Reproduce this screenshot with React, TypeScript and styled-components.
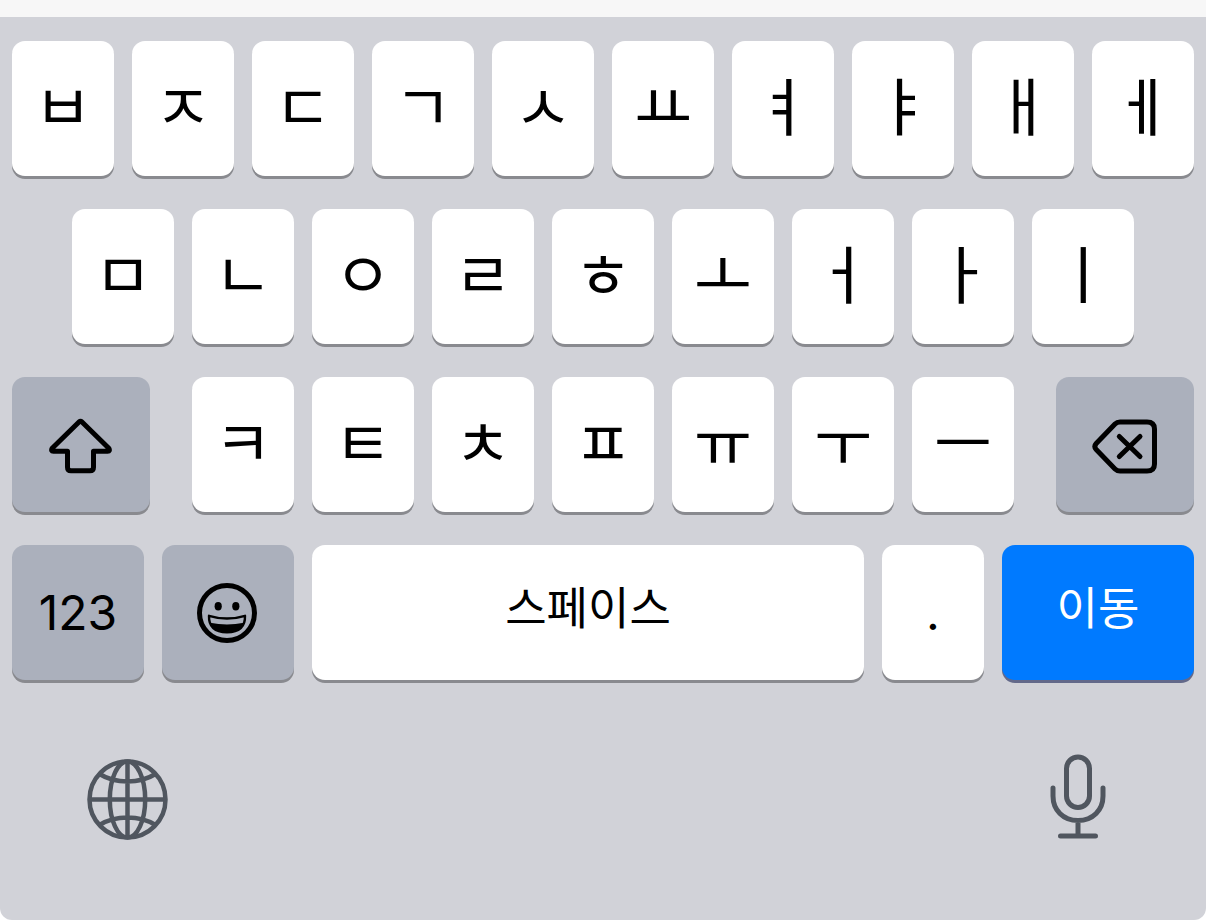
import React from "react";
import styled, { createGlobalStyle, css } from "styled-components";

const GlobalStyle = createGlobalStyle`
  *, *::before, *::after { box-sizing: border-box; }
  body { margin: 0; background: #ffffff; }
`;

type Tone = "light" | "dark" | "accent";

const tones = {
  light: css`background: #ffffff; color: #000000; box-shadow: 0 3px 0 #898a8f;`,
  dark: css`background: #abb0bc; color: #000000; box-shadow: 0 3px 0 #898a8f;`,
  accent: css`background: #007aff; color: #ffffff; box-shadow: 0 3px 0 #63698a;`,
};

const Page = styled.div`
  display: flex;
  flex-direction: column;
  min-height: 100vh;
`;

const TopStrip = styled.div`
  height: 17px;
  background: #f7f7f7;
`;

const Keyboard = styled.main`
  flex: 1;
  display: flex;
  flex-direction: column;
  gap: 33px;
  padding: 24px 12px 80px;
  background: #d1d2d8;
  border-radius: 0 0 12px 12px;
`;

const Row = styled.div<{ $inset?: number }>`
  display: flex;
  gap: 18px;
  padding: 0 ${(p) => p.$inset ?? 0}px;
`;

const LetterGroup = styled.div`
  flex: 822 1 0;
  display: flex;
  gap: 18px;
  margin: 0 24px;
`;

const Key = styled.button<{ $tone?: Tone; $span?: number }>`
  flex: ${(p) => p.$span ?? 102} 1 0;
  min-width: 0;
  height: 135px;
  display: flex;
  align-items: center;
  justify-content: center;
  padding: 0;
  border: 0;
  border-radius: 13px;
  ${(p) => tones[p.$tone ?? "light"]}
`;

const LetterKey = styled(Key)`
  padding-bottom: 12px;
  font: 400 63px/80px "Noto Sans CJK KR", sans-serif;
`;

const WordKey = styled(Key)`
  padding-bottom: 14px;
  font: 400 45px/64px "Noto Sans CJK KR", sans-serif;
  white-space: nowrap;
`;

const NumberKey = styled(Key)`
  font: 400 48px/64px Inter, sans-serif;
`;

const Footer = styled.div`
  display: flex;
  justify-content: space-between;
  align-items: flex-end;
  padding: 41px 87px 0 74px;
`;

const BareButton = styled.button`
  display: flex;
  padding: 0;
  border: 0;
  background: none;
  color: #50565f;
`;

const ShiftIcon = () => (
  <svg width="64" height="58" viewBox="0 0 64 58" fill="none" stroke="currentColor" strokeWidth="5" strokeLinejoin="round" aria-hidden="true">
    <path d="M30 6 3.200 32.200Q1.600 35.200 4.400 35.200H18.500V51.300Q18.500 54.800 22 54.800H41Q44.500 54.800 44.500 51.300V35.200H58.600Q61.400 35.200 59.800 32.200L33 6Q31.500 4.800 30 6Z" />
  </svg>
);

const BackspaceIcon = () => (
  <svg width="66" height="58" viewBox="0 0 66 58" fill="none" stroke="currentColor" strokeWidth="5" strokeLinecap="round" strokeLinejoin="round" aria-hidden="true">
    <path d="M28 6H55Q62.500 6 62.500 13V48Q62.500 55 55 55H28Q25 55 23 53L4.200 33.500Q1.500 30.500 4.200 27.500L23 8Q25 6 28 6Z" />
    <path d="M27.300 20.500 48 40.500M48 20.500 27.300 40.500" />
  </svg>
);

const SmileIcon = () => (
  <svg width="62" height="60" viewBox="0 0 62 60" aria-hidden="true">
    <circle cx="30" cy="30" r="27.500" fill="none" stroke="currentColor" strokeWidth="5" />
    <ellipse cx="21.200" cy="23.300" rx="3.600" ry="4.200" fill="currentColor" />
    <ellipse cx="38.800" cy="23.300" rx="3.600" ry="4.200" fill="currentColor" />
    <path d="M12 32.800Q30 38.300 48 32.800Q48.600 49.200 30 49.200Q11.400 49.200 12 32.800Z" fill="none" stroke="currentColor" strokeWidth="2.400" strokeLinejoin="round" />
    <path d="M13 39.800Q30 43 47 39.800Q43.500 50 30 50Q16.500 50 13 39.800Z" fill="currentColor" />
  </svg>
);

const GlobeIcon = () => (
  <svg width="82" height="82" viewBox="0 0 82 82" fill="none" stroke="currentColor" strokeWidth="4.500" aria-hidden="true">
    <circle cx="41.500" cy="41.500" r="38" />
    <ellipse cx="41.500" cy="41.500" rx="17.700" ry="38" />
    <path d="M41.500 3V79M3 41.500H79M13.500 16Q25.500 23.500 41.500 23.500T69.500 16M13.500 67Q25.500 59.500 41.500 59.500T69.500 67" />
  </svg>
);

const MicIcon = () => (
  <svg width="58" height="86" viewBox="0 0 58 86" fill="none" stroke="currentColor" strokeWidth="5" strokeLinecap="round" aria-hidden="true">
    <rect x="17.500" y="3" width="23" height="50.500" rx="11.500" />
    <path d="M4 34V42C4 56 14 66.500 29 66.500S54 56 54 42V34M29 66.500V82M11.500 82H46.500" />
  </svg>
);

const Letters = ({ text }: { text: string }) => (
  <>
    {Array.from(text).map((letter) => (
      <LetterKey key={letter} type="button">{letter}</LetterKey>
    ))}
  </>
);

export default function App() {
  return (
    <Page>
      <GlobalStyle />
      <TopStrip />
      <Keyboard>
        <Row><Letters text="ㅂㅈㄷㄱㅅㅛㅕㅑㅐㅔ" /></Row>
        <Row $inset={60}><Letters text="ㅁㄴㅇㄹㅎㅗㅓㅏㅣ" /></Row>
        <Row>
          <Key type="button" $tone="dark" $span={138} aria-label="Shift"><ShiftIcon /></Key>
          <LetterGroup><Letters text="ㅋㅌㅊㅍㅠㅜㅡ" /></LetterGroup>
          <Key type="button" $tone="dark" $span={138} aria-label="Backspace"><BackspaceIcon /></Key>
        </Row>
        <Row>
          <NumberKey type="button" $tone="dark" $span={132}>123</NumberKey>
          <Key type="button" $tone="dark" $span={132} aria-label="Emoji"><SmileIcon /></Key>
          <WordKey type="button" $span={552}>스페이스</WordKey>
          <NumberKey type="button">.</NumberKey>
          <WordKey type="button" $tone="accent" $span={192}>이동</WordKey>
        </Row>
        <Footer>
          <BareButton type="button" aria-label="Change language"><GlobeIcon /></BareButton>
          <BareButton type="button" aria-label="Dictation"><MicIcon /></BareButton>
        </Footer>
      </Keyboard>
    </Page>
  );
}
